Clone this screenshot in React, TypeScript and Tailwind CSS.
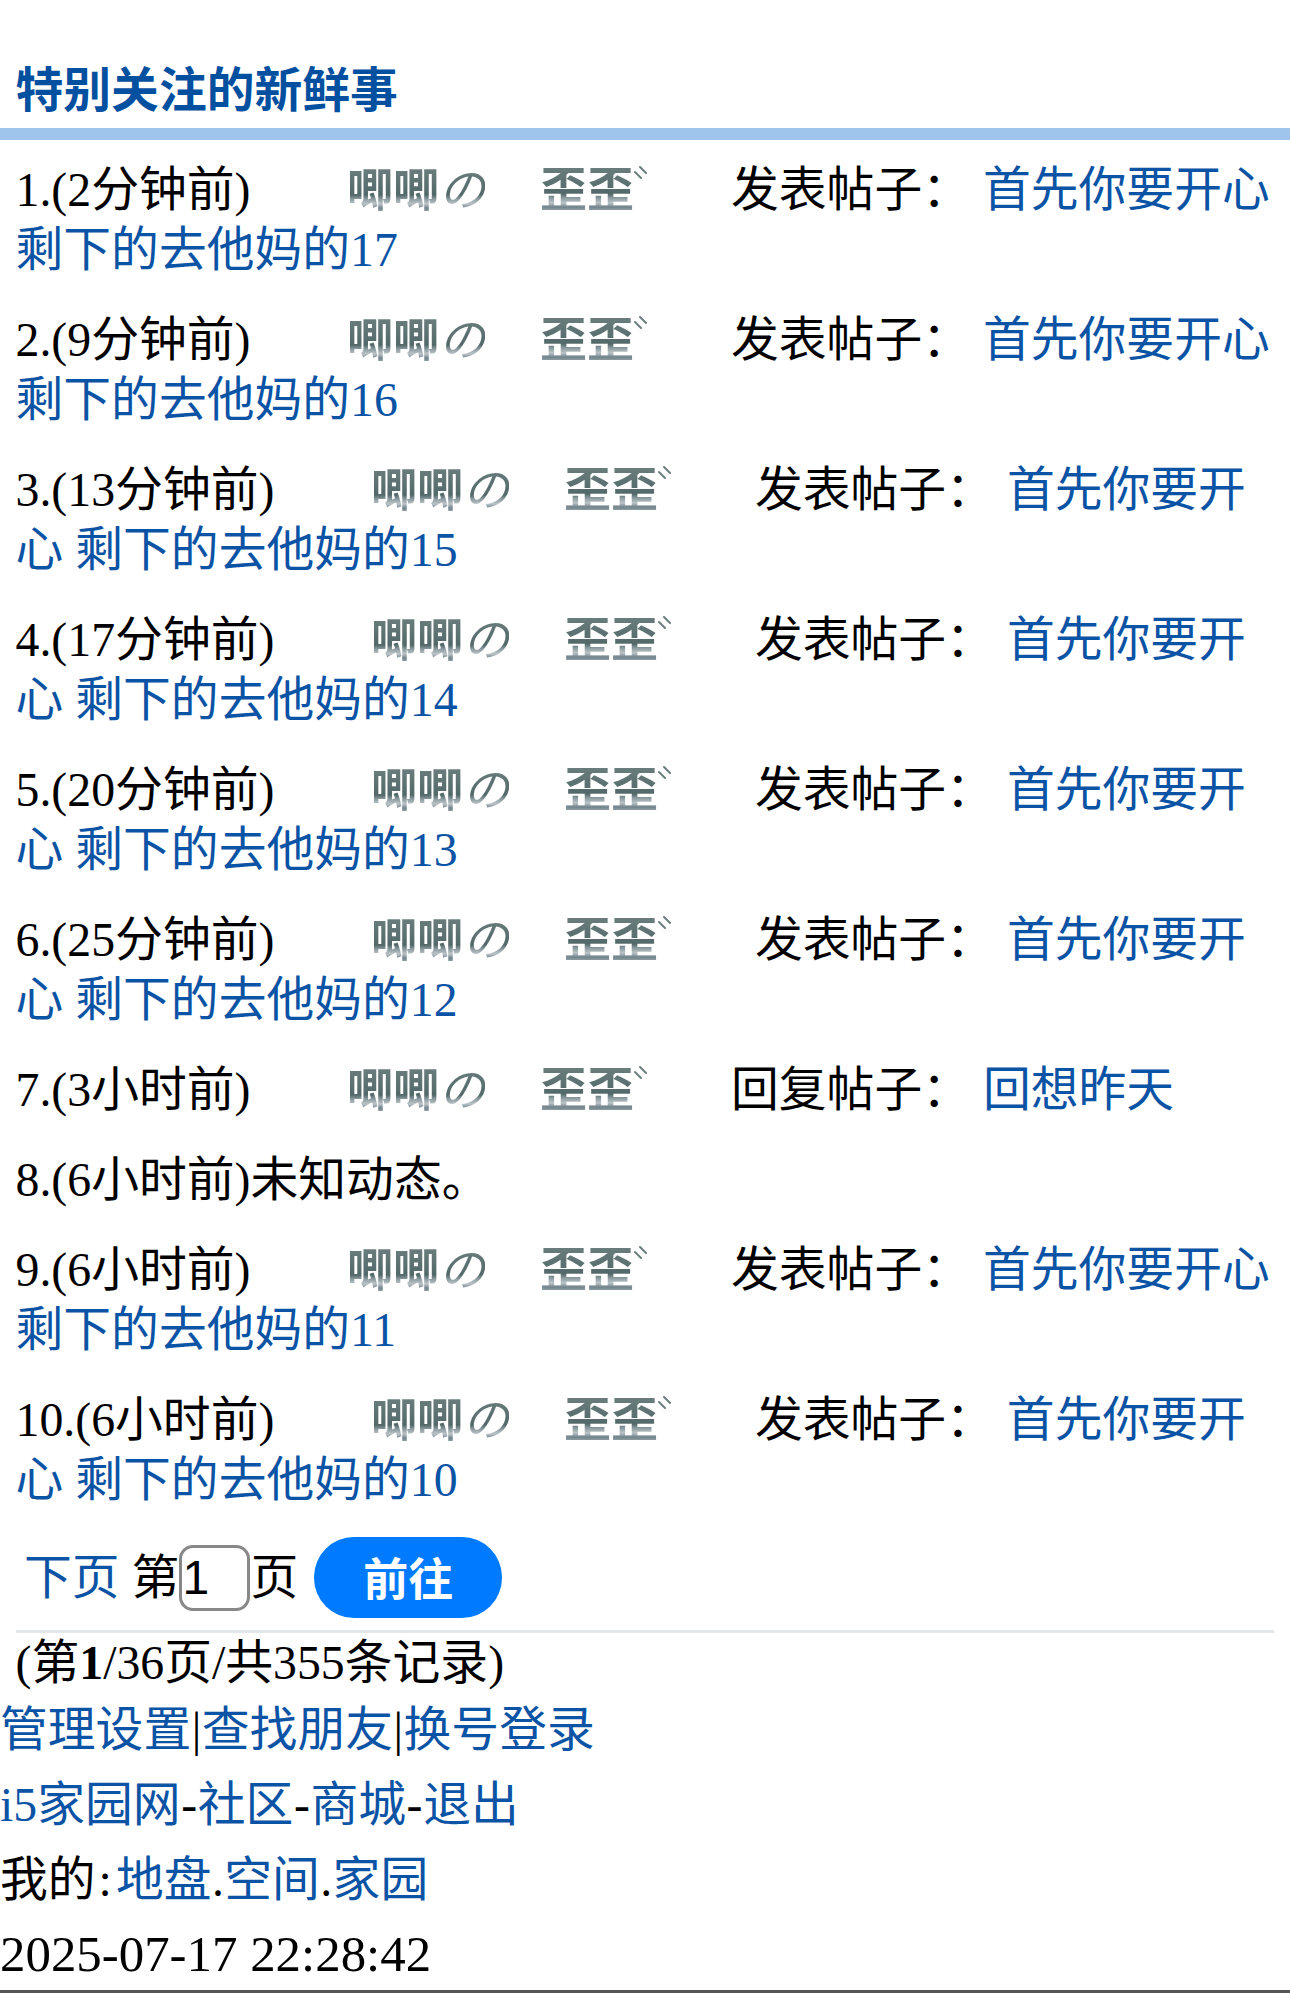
const rows = [
  { time: '2分钟前', action: '发表帖子', title: '首先你要开心 剩下的去他妈的17' },
  { time: '9分钟前', action: '发表帖子', title: '首先你要开心 剩下的去他妈的16' },
  { time: '13分钟前', action: '发表帖子', title: '首先你要开心 剩下的去他妈的15' },
  { time: '17分钟前', action: '发表帖子', title: '首先你要开心 剩下的去他妈的14' },
  { time: '20分钟前', action: '发表帖子', title: '首先你要开心 剩下的去他妈的13' },
  { time: '25分钟前', action: '发表帖子', title: '首先你要开心 剩下的去他妈的12' },
  { time: '3小时前', action: '回复帖子', title: '回想昨天' },
  { time: '6小时前' },
  { time: '6小时前', action: '发表帖子', title: '首先你要开心 剩下的去他妈的11' },
  { time: '6小时前', action: '发表帖子', title: '首先你要开心 剩下的去他妈的10' },
];

function Nick() {
  return (
    <span className="ml-[96.5px] inline-flex items-baseline font-bold leading-[50px]">
      <span className="bg-[linear-gradient(180deg,#6c7f7f_0%,#536969_58%,#8b9b9f_66%,#bcc5c8_76%,#71838b_84%,#a0adb3_94%)] bg-clip-text text-[46px] text-transparent">
        唧唧
        <span className="font-normal italic">の</span>
      </span>
      <span className="ml-[55px] bg-[linear-gradient(180deg,#6c7f7f_0%,#536969_58%,#8b9b9f_66%,#bcc5c8_76%,#71838b_84%,#a0adb3_94%)] bg-clip-text text-[47px] text-transparent">
        歪歪
      </span>
      {/* the little double tick after the name */}
      <svg width="14" height="14" viewBox="0 0 14 14" className="mt-px self-start">
        <path d="M1 6l6 6M6 1l6 6" fill="none" stroke="#6c7f7f" strokeWidth="2" strokeLinecap="round" />
      </svg>
    </span>
  );
}

function Link({ children }: { children: React.ReactNode }) {
  return <a className="text-[#0b53a5]">{children}</a>;
}

export default function App() {
  return (
    <div className="h-[1993px] overflow-hidden bg-white font-['Liberation_Serif','Noto_Sans_CJK_SC',serif] text-[47.8px] leading-[60px] text-black">
      <h2 className="pt-[61px] pr-4 pb-[7px] pl-[15.5px] font-bold text-[#0450a0]">特别关注的新鲜事</h2>
      <div className="h-3 bg-[#9fc5ec]" />

      <div className="pt-[5px]">
        {rows.map((row, i) => (
          <div key={i} className="py-[15px] pr-4 pl-[15.5px]">
            {i + 1}.({row.time})
            {row.action ? (
              <>
                <Nick />
                <span className="ml-[83px]">{row.action}：</span>
                <span className="mr-[1px]"> </span>
                <Link>{row.title}</Link>
              </>
            ) : (
              '未知动态。'
            )}
          </div>
        ))}
      </div>

      <div className="flex items-center pt-[12px] pb-[12px] pl-[24px]">
        <Link>下页</Link>
        <span className="ml-[12px]">第</span>
        <input
          readOnly
          value="1"
          className="h-[66px] w-[71px] rounded-[14px] border-[3px] border-[#888888] pl-0 font-['Liberation_Sans',sans-serif] text-[48px]"
        />
        <span>页</span>
        <button className="ml-[16px] h-[81px] w-[188px] rounded-[40px] bg-[#007bff] pt-[6px] text-[45px] font-bold text-white">
          前往
        </button>
      </div>

      <div className="mx-4 h-[3px] bg-[#e3e7ea]" />
      <div className="pr-4 pl-[15.5px]">
        (第<b>1</b>/36页/共355条记录)
      </div>

      <div className="mt-[7px] flex flex-col gap-[15px]">
        <div>
          <Link>管理设置</Link>
          <span className="mx-[0.5px]">|</span>
          <Link>查找朋友</Link>
          <span className="mx-[0.5px]">|</span>
          <Link>换号登录</Link>
        </div>
        <div>
          <Link>i5家园网</Link>
          <span className="mx-[0.6px]">-</span>
          <Link>社区</Link>
          <span className="mx-[0.6px]">-</span>
          <Link>商城</Link>
          <span className="mx-[0.6px]">-</span>
          <Link>退出</Link>
        </div>
        <div>
          我的<span className="mr-[4px] ml-[3px]">:</span>
          <Link>地盘</Link>
          <span className="mx-[0.4px]">.</span>
          <Link>空间</Link>
          <span className="mx-[0.4px]">.</span>
          <Link>家园</Link>
        </div>
        <div className="-mt-px text-[50.9px]">2025-07-17 22:28:42</div>
      </div>
      <div className="mt-[6px] h-[3px] bg-[#555555]" />
    </div>
  );
}
